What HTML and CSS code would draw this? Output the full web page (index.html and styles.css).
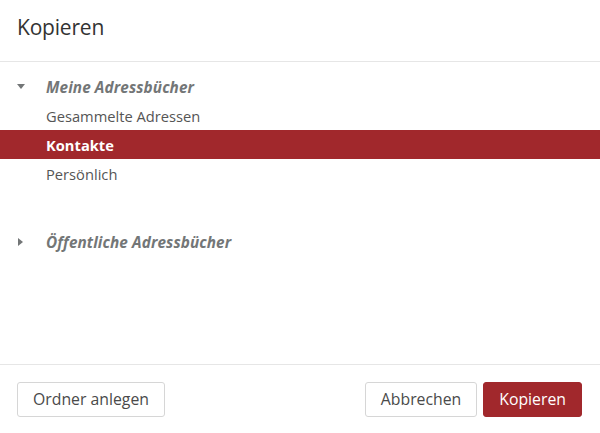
FILE: index.html
```html
<!DOCTYPE html>
<html lang="de">
<head>
  <meta charset="UTF-8" />
  <meta name="viewport" content="width=device-width, initial-scale=1.0" />
  <title>Kopieren</title>
  <link rel="stylesheet" href="styles.css">
</head>
<body>
  <div class="dialog">
    <div class="dialog-header">
      <h2>Kopieren</h2>
    </div>

    <div class="dialog-body">
      <ul class="tree">
        <li class="group expanded">
          <div class="group-title">
            <span class="toggle"></span>
            <span>Meine Adressbücher</span>
          </div>
          <ul>
            <li>Gesammelte Adressen</li>
            <li class="selected">Kontakte</li>
            <li>Persönlich</li>
          </ul>
        </li>
        <li class="group collapsed">
          <div class="group-title">
            <span class="toggle"></span>
            <span>Öffentliche Adressbücher</span>
          </div>
        </li>
      </ul>
    </div>

    <div class="dialog-footer">
      <button class="btn">Ordner anlegen</button>
      <div class="spacer"></div>
      <button class="btn">Abbrechen</button>
      <button class="btn primary">Kopieren</button>
    </div>
  </div>
</body>
</html>
```

FILE: styles.css
```css
html, body {
  margin: 0;
  padding: 0;
  height: 100%;
}
body {
  font-family: "Open Sans", "Noto Sans", sans-serif;
  background: #fff;
  color: #4a4a4a;
}
.dialog {
  height: 433px;
  display: flex;
  flex-direction: column;
}
.dialog-header {
  height: 62px;
  border-bottom: 1px solid #e6e6e6;
  padding: 0 17px 7px;
  display: flex;
  align-items: center;
  box-sizing: border-box;
}
.dialog-header h2 {
  margin: 0;
  font-size: 21px;
  font-weight: normal;
  color: #333;
  letter-spacing: -0.2px;
}
.dialog-body {
  flex: 1;
  padding-top: 10px;
}
.tree, .tree ul {
  list-style: none;
  margin: 0;
  padding: 0;
}
.group-title {
  height: 29px;
  display: flex;
  align-items: center;
  font-weight: bold;
  font-style: italic;
  color: #737677;
  font-size: 15.3px;
  letter-spacing: 0.1px;
}
.toggle {
  width: 29px;
  padding-left: 17px;
  box-sizing: content-box;
  display: flex;
  align-items: center;
}
.expanded .toggle::before {
  content: "";
  border-left: 4px solid transparent;
  border-right: 4px solid transparent;
  border-top: 5px solid #737677;
}
.collapsed .toggle::before {
  content: "";
  margin-left: 1px;
  border-top: 4px solid transparent;
  border-bottom: 4px solid transparent;
  border-left: 5px solid #737677;
}
.tree ul li {
  height: 29px;
  line-height: 30px;
  padding-left: 46px;
  font-size: 14.7px;
  color: #555;
}
.tree ul li.selected {
  background: #a1282c;
  color: #fff;
  font-weight: bold;
}
.group.expanded {
  margin-bottom: 39px;
}
.dialog-footer {
  height: 68px;
  border-top: 1px solid #e6e6e6;
  display: flex;
  align-items: center;
  padding: 0 18px 0 17px;
  gap: 6px;
}
.spacer {
  flex: 1;
}
.btn {
  height: 35px;
  padding: 0 15px;
  font-family: inherit;
  font-size: 15.8px;
  color: #4a4a4a;
  background: #fff;
  border: 1px solid #d6d6d6;
  border-radius: 3px;
  cursor: pointer;
}
.btn.primary {
  background: #a1282c;
  border-color: #a1282c;
  color: #fff;
}
```
